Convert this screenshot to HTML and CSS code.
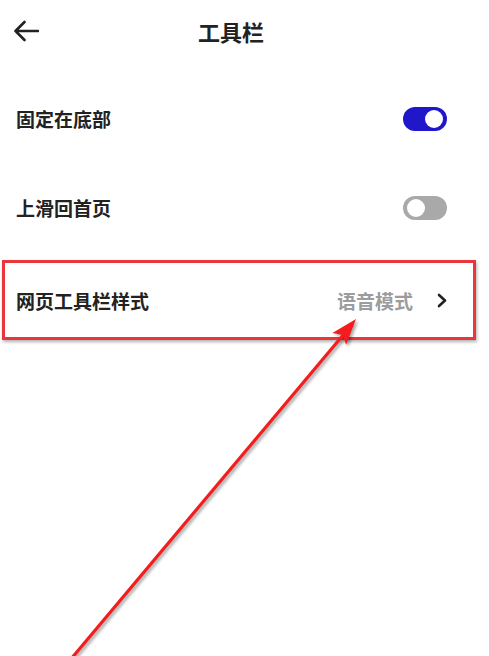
FILE: index.html
```html
<!DOCTYPE html>
<html lang="zh-CN">
<head>
    <meta charset="UTF-8">
    <meta name="viewport" content="width=device-width, initial-scale=1.0">
    <title>工具栏</title>
    <link rel="stylesheet" href="styles.css">
</head>
<body>
    <div class="page">
        <div class="header">
            <svg class="back-icon" width="26" height="22" viewBox="0 0 26 22">
                <path d="M25 11 H2.5 M11.5 2 L2.5 11 L11.5 20" fill="none" stroke="#222" stroke-width="2.6" stroke-linecap="round" stroke-linejoin="round"/>
            </svg>
            <h1 class="title">工具栏</h1>
        </div>

        <div class="settings-list">
            <div class="setting-row">
                <span class="setting-label">固定在底部</span>
                <span class="switch on"><span class="knob"></span></span>
            </div>
            <div class="setting-row">
                <span class="setting-label">上滑回首页</span>
                <span class="switch"><span class="knob"></span></span>
            </div>
            <div class="setting-row highlighted">
                <span class="setting-label">网页工具栏样式</span>
                <span class="setting-value">语音模式</span>
                <svg class="chevron" width="10" height="15" viewBox="0 0 10 15">
                    <path d="M2 2 L8 7.5 L2 13" fill="none" stroke="#222" stroke-width="2.6" stroke-linecap="round" stroke-linejoin="round"/>
                </svg>
            </div>
        </div>

        <!-- annotation arrow pointing at the highlighted row -->
        <svg class="annotation" width="489" height="656" viewBox="0 0 489 656">
            <line x1="71" y1="659" x2="344" y2="334" stroke="#f41c1c" stroke-width="3.2"/>
            <polygon points="356,319 346.2,344.7 342.6,335 332.4,333.1" fill="#f41c1c"/>
        </svg>
    </div>
</body>
</html>
```

FILE: styles.css
```css
* {
    box-sizing: border-box;
}
body {
    margin: 0;
    padding: 0;
    background-color: #ffffff;
    color: #222222;
    font-family: "Noto Sans CJK SC", "Noto Sans", sans-serif;
}
.page {
    position: relative;
    width: 489px;
    height: 656px;
    overflow: hidden;
}
.header {
    display: flex;
    align-items: center;
    height: 62px;
    padding-left: 13px;
}
.back-icon {
    flex: none;
}
.title {
    margin: 0 0 0 159px;
    font-size: 22px;
    font-weight: 700;
    line-height: 1;
}
.settings-list {
    padding-top: 12px;
}
.setting-row {
    display: flex;
    align-items: center;
    height: 89px;
    padding: 0 42px 0 16px;
}
.setting-label {
    flex: 1;
    font-size: 19px;
    font-weight: 700;
    color: #222222;
}
.switch {
    position: relative;
    width: 44px;
    height: 24px;
    border-radius: 12px;
    background-color: #a9a9a9;
}
.switch .knob {
    position: absolute;
    top: 3px;
    left: 4px;
    width: 18px;
    height: 18px;
    border-radius: 50%;
    background-color: #ffffff;
}
.switch.on {
    background-color: #1f17c9;
}
.switch.on .knob {
    left: 22px;
}
.highlighted {
    height: 80px;
    margin: 8px 13px 0 2px;
    padding: 0 26px 0 11px;
    border: 3px solid #e8363c;
    box-shadow: 1px 2px 3px rgba(0, 0, 0, 0.3);
}
.setting-value {
    margin-right: 24px;
    font-size: 19px;
    font-weight: 700;
    color: #9c9c9c;
}
.chevron {
    flex: none;
}
.annotation {
    position: absolute;
    top: 0;
    left: 0;
    pointer-events: none;
    filter: drop-shadow(2px 2px 1.5px rgba(0, 0, 0, 0.35));
}
```
